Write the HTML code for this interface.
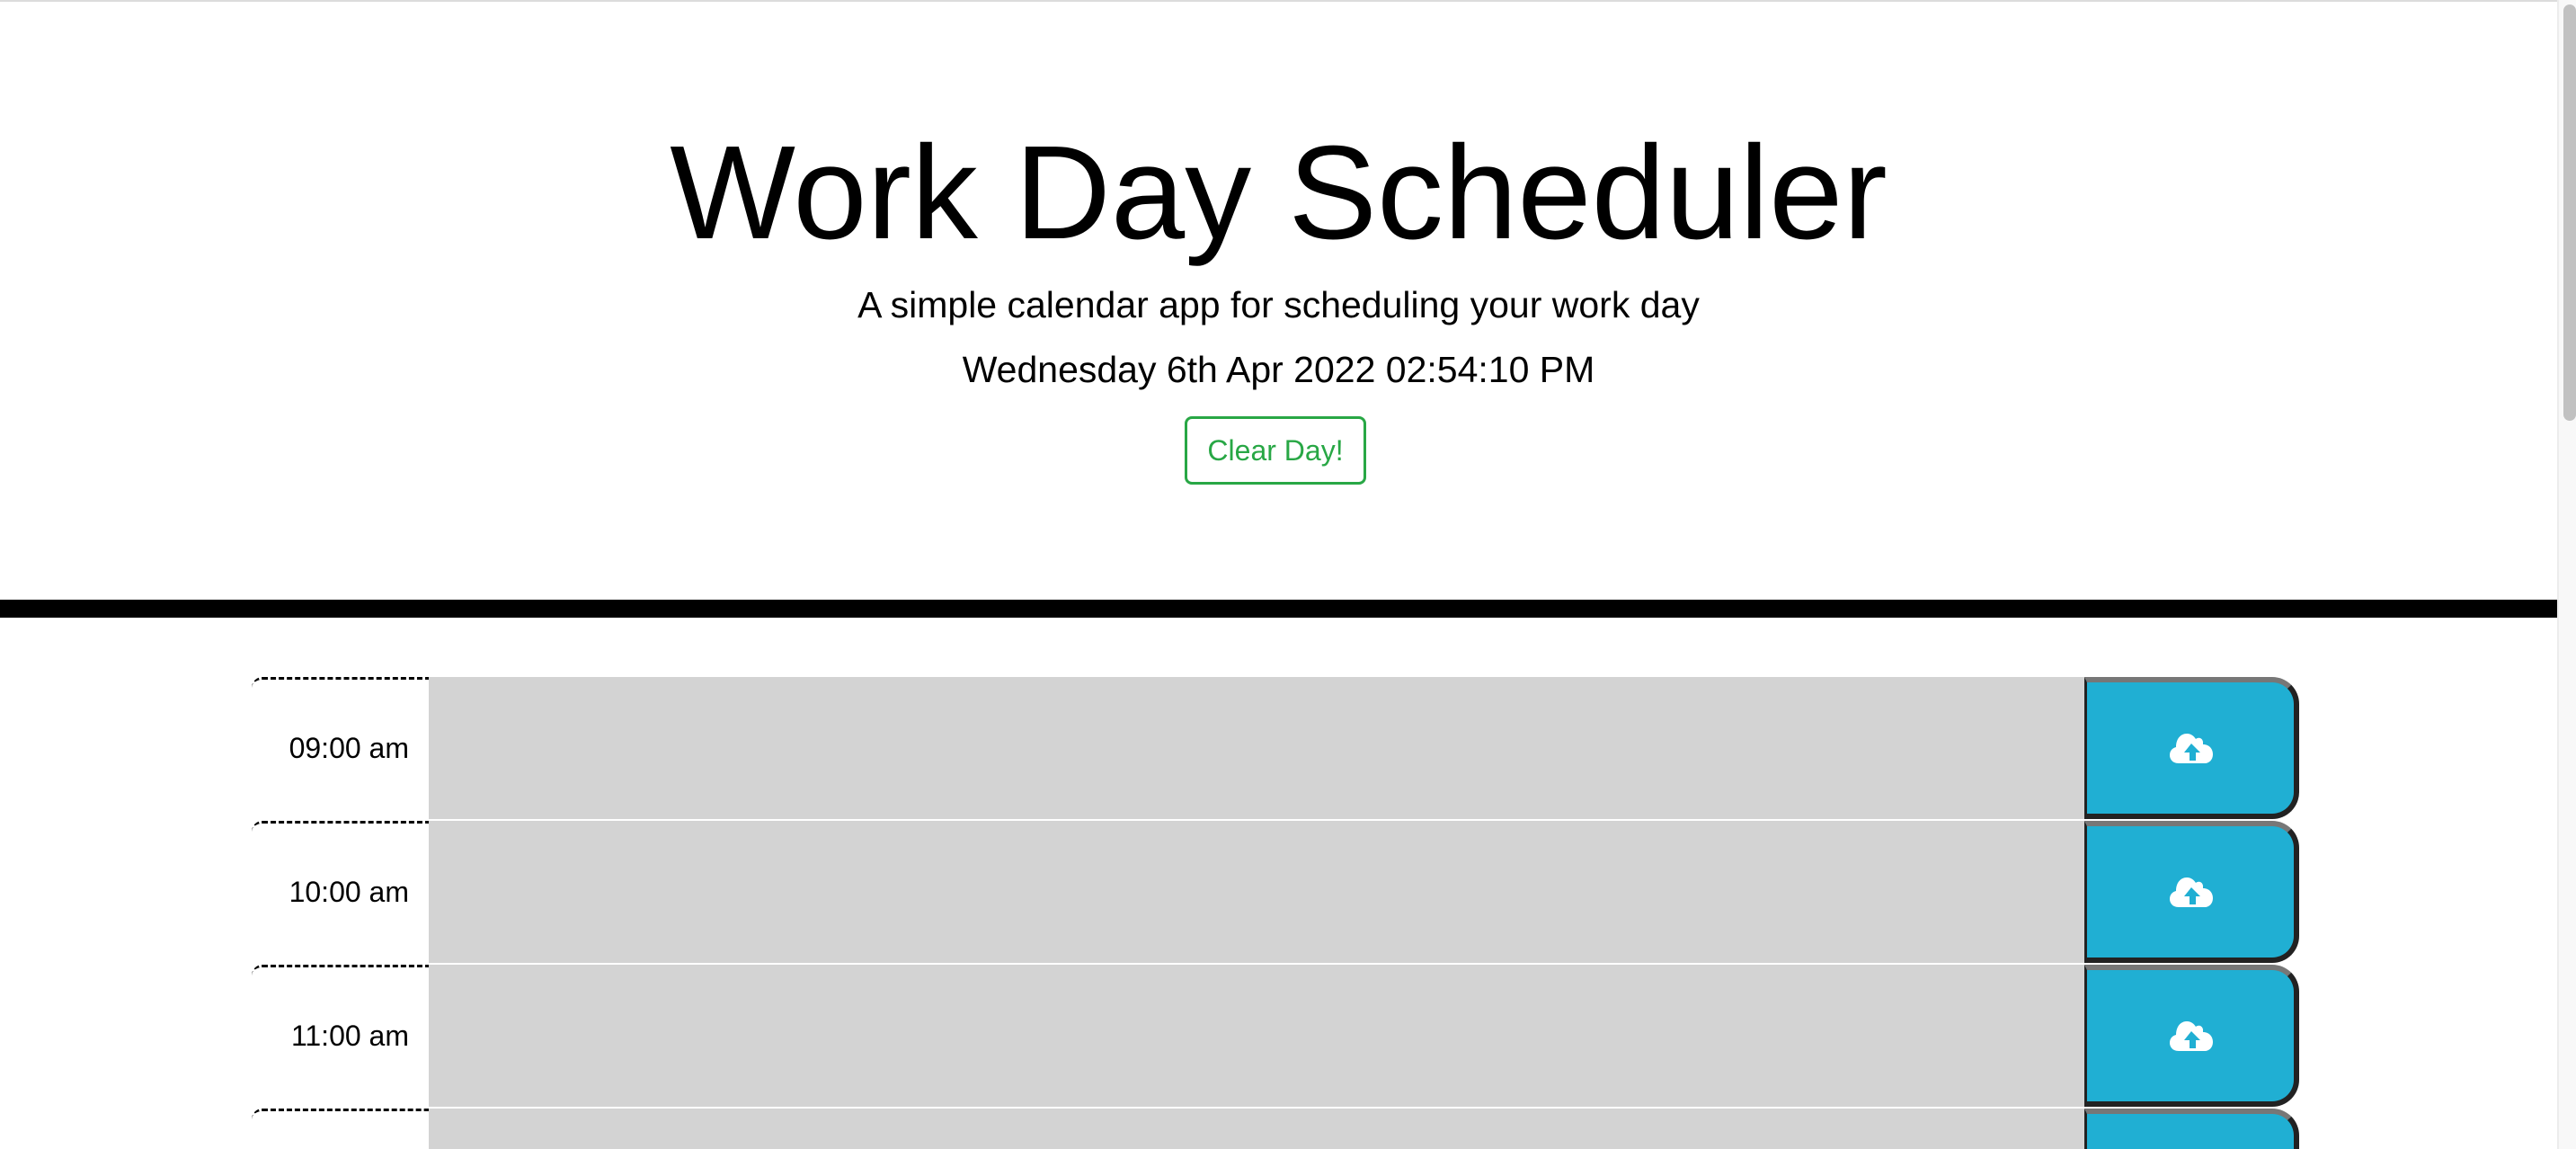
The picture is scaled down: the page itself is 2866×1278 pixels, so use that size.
<!DOCTYPE html>
<html><head><meta charset="utf-8"><style>
html,body{margin:0;padding:0;}
body{width:2866px;height:1278px;overflow:hidden;position:relative;background:#fff;font-family:"Liberation Sans",sans-serif;}
.topline{position:absolute;left:0;top:0;width:2845px;height:2px;background:#dcdcdc;}
.sb{position:absolute;left:2845px;top:0;width:21px;height:1278px;background:#f8f8f8;border-left:2px solid #ececec;box-sizing:border-box;}
.thumb{position:absolute;left:2852px;top:5px;width:14px;height:463px;background:#c1c1c1;border-radius:7px;}
.c{position:absolute;left:0;width:2845px;text-align:center;white-space:nowrap;color:#000;}
h1{margin:0;font-weight:normal;font-size:148px;top:140px;line-height:150px;letter-spacing:0px;}
.sub{font-size:41px;top:316px;line-height:46px;}
.date{font-size:41px;top:388px;line-height:46px;}
.btn{position:absolute;left:1318px;top:463px;width:202px;height:76px;box-sizing:border-box;border:3px solid #28a745;border-radius:8px;color:#28a745;font-size:32px;text-align:center;line-height:70px;}
.bar{position:absolute;left:0;top:667px;width:2845px;height:20px;background:#000;}
.row{position:absolute;left:280px;height:160px;}
.time{position:absolute;left:0;top:0;width:197px;height:160px;border-top:3px dashed #000;border-top-left-radius:12px;box-sizing:border-box;text-align:right;padding-right:22px;font-size:32px;line-height:152px;color:#000;}
.ta{position:absolute;left:197px;top:0;width:1842px;height:158px;background:#d3d3d3;}
.save{position:absolute;left:2039px;top:0;width:239px;height:158px;box-sizing:border-box;background:#20afd3;border:6px solid #222;border-left-width:3px;border-top-color:#777;border-radius:0 30px 30px 0;}
.save svg{position:absolute;left:92px;top:55px;}
</style></head><body>
<div class="topline"></div>
<h1 class="c">Work Day Scheduler</h1>
<div class="c sub">A simple calendar app for scheduling your work day</div>
<div class="c date">Wednesday 6th Apr 2022 02:54:10 PM</div>
<div class="btn">Clear Day!</div>
<div class="bar"></div>
<div class="row" style="top:753px"><div class="time">09:00 am</div><div class="ta"></div><div class="save"><svg width="50" height="36" viewBox="0 0 50 36"><path d="M10 35 C2 35 0 29 0 26 C0 21 3 18 7 17 C7 8 12 2 19 2 C24 2 27 5 29 8 C31 6 36 6 37 11 C37 13 37 13 37 14 C44 14 48 19 48 25 C48 31 44 35 39 35 Z" fill="#fff"/><path d="M24 13 L34 23 L29 23 L29 32 L22 32 L22 23 L16 23 Z" fill="#20afd3"/></svg></div></div>
<div class="row" style="top:913px"><div class="time">10:00 am</div><div class="ta"></div><div class="save"><svg width="50" height="36" viewBox="0 0 50 36"><path d="M10 35 C2 35 0 29 0 26 C0 21 3 18 7 17 C7 8 12 2 19 2 C24 2 27 5 29 8 C31 6 36 6 37 11 C37 13 37 13 37 14 C44 14 48 19 48 25 C48 31 44 35 39 35 Z" fill="#fff"/><path d="M24 13 L34 23 L29 23 L29 32 L22 32 L22 23 L16 23 Z" fill="#20afd3"/></svg></div></div>
<div class="row" style="top:1073px"><div class="time">11:00 am</div><div class="ta"></div><div class="save"><svg width="50" height="36" viewBox="0 0 50 36"><path d="M10 35 C2 35 0 29 0 26 C0 21 3 18 7 17 C7 8 12 2 19 2 C24 2 27 5 29 8 C31 6 36 6 37 11 C37 13 37 13 37 14 C44 14 48 19 48 25 C48 31 44 35 39 35 Z" fill="#fff"/><path d="M24 13 L34 23 L29 23 L29 32 L22 32 L22 23 L16 23 Z" fill="#20afd3"/></svg></div></div>
<div style="position:absolute;left:280px;top:1233px;width:197px;height:45px;border-top:3px dashed #000;border-top-left-radius:12px;box-sizing:border-box;"></div>
<div style="position:absolute;left:477px;top:1233px;width:1842px;height:45px;background:#d3d3d3;"></div>
<div style="position:absolute;left:2319px;top:1233px;width:239px;height:45px;box-sizing:border-box;background:#20afd3;border:6px solid #222;border-left-width:3px;border-top-color:#777;border-bottom:0;border-radius:0 30px 0 0;"></div>
<div class="sb"></div><div class="thumb"></div>
</body></html>
